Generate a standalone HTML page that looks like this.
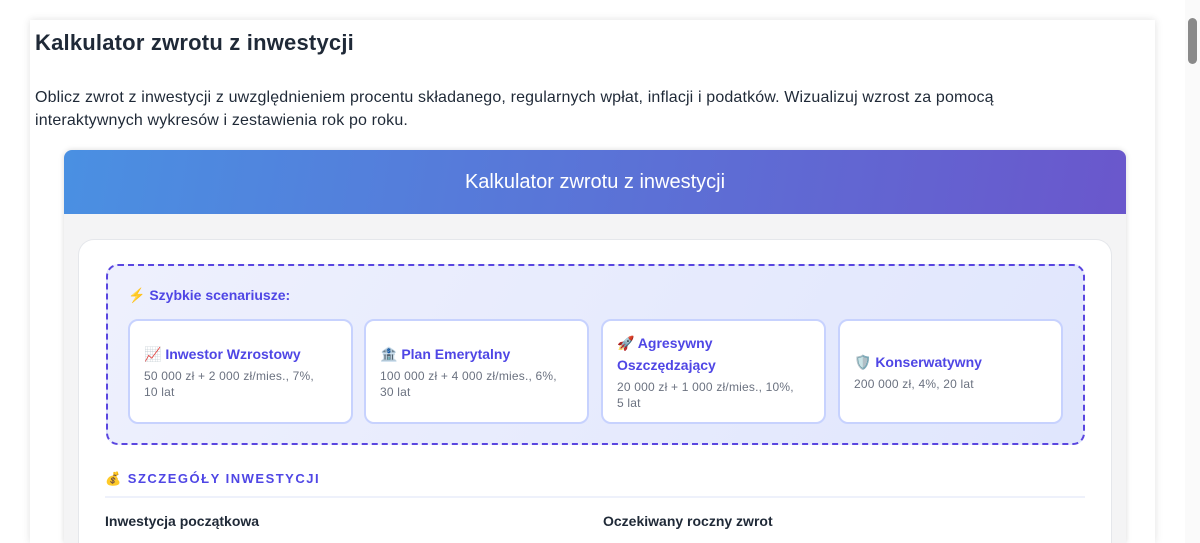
<!DOCTYPE html>
<html><head><meta charset="utf-8"><style>
*{box-sizing:border-box;margin:0;padding:0}
html,body{width:1200px;height:543px;overflow:hidden;background:#fff;font-family:"Liberation Sans","Noto Sans CJK SC",sans-serif;position:relative}
.outer{position:absolute;left:30px;top:20px;width:1125px;height:523px;background:#fff;box-shadow:0 0 8px rgba(0,0,0,.12)}
h1{position:absolute;left:35px;top:30px;font-size:22px;font-weight:600;color:#1f2937;letter-spacing:.2px}
.desc{position:absolute;left:35px;top:86px;width:1020px;font-size:16px;line-height:23px;color:#1f2937;letter-spacing:.15px}
.calc{position:absolute;left:64px;top:150px;width:1062px;height:393px;background:#f4f4f5;border-radius:8px 8px 0 0;box-shadow:0 0 6px rgba(0,0,0,.15);overflow:hidden}
.hdr{height:64px;background:linear-gradient(100deg,#4a90e2,#6a57cc);color:#fff;font-size:20px;text-align:center;line-height:64px}
.card{position:absolute;left:14px;top:89px;width:1034px;height:304px;background:#fff;border-radius:16px 16px 0 0;border:1px solid #e5e7eb;border-bottom:0}
.scen{position:absolute;left:106px;top:264px;width:979px;height:181px;border:2px dashed #5a46e0;border-radius:12px;background:linear-gradient(120deg,#eef0fd,#e0e6fd)}
.st{position:absolute;left:20px;top:21px;font-size:14px;font-weight:700;color:#4f46e5}
.sc{position:absolute;top:53px;width:225px;height:105px;background:#fff;border:2px solid #c7d2fe;border-radius:10px;padding:0 26px 0 14px;display:flex;flex-direction:column;justify-content:center}
.sc b{font-size:14px;color:#4f46e5;line-height:22px}
.sc span{font-size:12px;color:#6b7280;line-height:16px;margin-top:3px;letter-spacing:.2px}
.sec{position:absolute;left:105px;top:471px;font-size:13px;font-weight:700;letter-spacing:1.5px;color:#4f46e5}
.line{position:absolute;left:105px;top:496px;width:980px;height:2px;background:#eef1fb}
.lab{position:absolute;top:513px;font-size:14px;font-weight:600;color:#1f2937}
.sb{position:absolute;left:1185px;top:0;width:15px;height:543px;background:#fafafa}
.th{position:absolute;left:1188px;top:18px;width:9px;height:46px;background:#8a8a8a;border-radius:5px}
</style></head><body>
<div class="outer"></div>
<h1>Kalkulator zwrotu z inwestycji</h1>
<div class="desc">Oblicz zwrot z inwestycji z uwzględnieniem procentu składanego, regularnych wpłat, inflacji i podatków. Wizualizuj wzrost za pomocą interaktywnych wykresów i zestawienia rok po roku.</div>
<div class="calc"><div class="hdr">Kalkulator zwrotu z inwestycji</div><div class="card"></div></div>
<div class="scen">
<div class="st">⚡ Szybkie scenariusze:</div>
<div class="sc" style="left:20px"><b>📈 Inwestor Wzrostowy</b><span>50 000 zł + 2 000 zł/mies., 7%, 10 lat</span></div>
<div class="sc" style="left:256px"><b>🏦 Plan Emerytalny</b><span>100 000 zł + 4 000 zł/mies., 6%, 30 lat</span></div>
<div class="sc" style="left:493px"><b>🚀 Agresywny Oszczędzający</b><span>20 000 zł + 1 000 zł/mies., 10%, 5 lat</span></div>
<div class="sc" style="left:730px"><b>🛡️ Konserwatywny</b><span>200 000 zł, 4%, 20 lat</span></div>
</div>
<div class="sec">💰 SZCZEGÓŁY INWESTYCJI</div>
<div class="line"></div>
<div class="lab" style="left:105px">Inwestycja początkowa</div>
<div class="lab" style="left:603px">Oczekiwany roczny zwrot</div>
<div class="sb"></div><div class="th"></div>
</body></html>
